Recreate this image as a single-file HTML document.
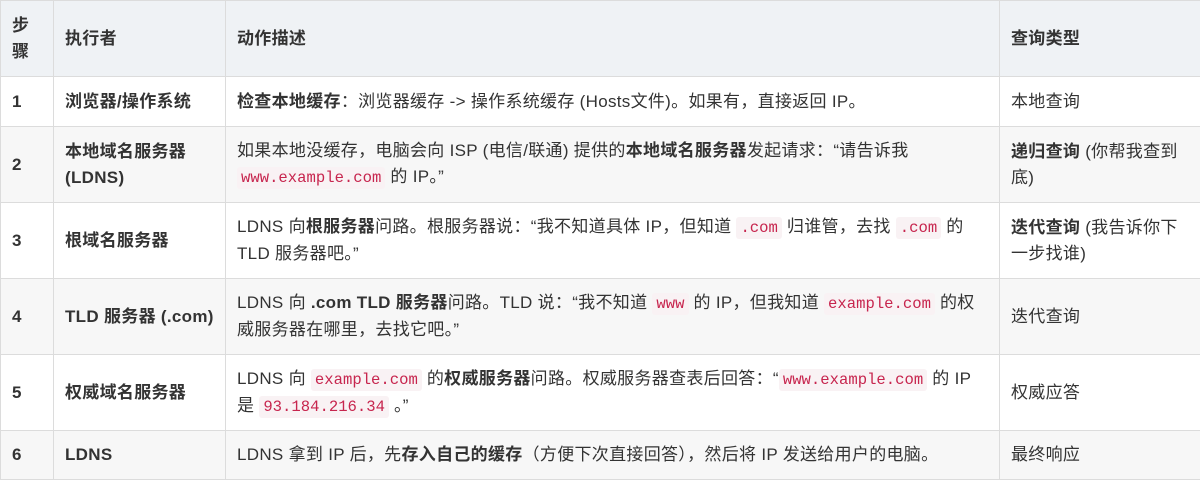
<!DOCTYPE html>
<html><head><meta charset="utf-8"><style>
body{margin:0;background:#fff;font-family:"Liberation Sans","Noto Sans CJK SC",sans-serif;font-size:17px;color:#333;}
table{border-collapse:collapse;width:1201px;table-layout:fixed;margin:0;}
td,th{border:1px solid #dcdcdc;padding:0 11px;line-height:26px;text-align:left;vertical-align:middle;white-space:nowrap;letter-spacing:0.3px;}
th{background:#eff2f5;font-weight:bold;}
tr:nth-child(odd) td{background:#f7f7f7;}
code{font-family:"Liberation Mono",monospace;font-size:15.6px;color:#c7254e;background:#f9f2f4;padding:2px 4px;border-radius:3px;letter-spacing:0;}
b{font-weight:bold;}
</style></head><body>
<table>
<colgroup><col style="width:53px"><col style="width:172px"><col style="width:774px"><col style="width:202px"></colgroup>
<tr style="height:76px"><th>步<br>骤</th><th>执行者</th><th>动作描述</th><th>查询类型</th></tr>
<tr style="height:50px"><td><b>1</b></td><td><b>浏览器/操作系统</b></td><td><b>检查本地缓存</b>：浏览器缓存 -&gt; 操作系统缓存 (Hosts文件)。如果有，直接返回 IP。</td><td>本地查询</td></tr>
<tr style="height:76px"><td><b>2</b></td><td><b>本地域名服务器<br>(LDNS)</b></td><td>如果本地没缓存，电脑会向 ISP (电信/联通) 提供的<b>本地域名服务器</b>发起请求：“请告诉我<br><code>www.example.com</code> 的 IP。”</td><td><b>递归查询</b> (你帮我查到<br>底)</td></tr>
<tr style="height:76px"><td><b>3</b></td><td><b>根域名服务器</b></td><td>LDNS 向<b>根服务器</b>问路。根服务器说：“我不知道具体 IP，但知道 <code>.com</code> 归谁管，去找 <code>.com</code> 的<br>TLD 服务器吧。”</td><td><b>迭代查询</b> (我告诉你下<br>一步找谁)</td></tr>
<tr style="height:76px"><td><b>4</b></td><td><b>TLD 服务器 (.com)</b></td><td>LDNS 向 <b>.com TLD 服务器</b>问路。TLD 说：“我不知道 <code>www</code> 的 IP，但我知道 <code>example.com</code> 的权<br>威服务器在哪里，去找它吧。”</td><td>迭代查询</td></tr>
<tr style="height:76px"><td><b>5</b></td><td><b>权威域名服务器</b></td><td>LDNS 向 <code>example.com</code> 的<b>权威服务器</b>问路。权威服务器查表后回答：“<code>www.example.com</code> 的 IP<br>是 <code>93.184.216.34</code> 。”</td><td>权威应答</td></tr>
<tr style="height:49px"><td><b>6</b></td><td><b>LDNS</b></td><td>LDNS 拿到 IP 后，先<b>存入自己的缓存</b>（方便下次直接回答），然后将 IP 发送给用户的电脑。</td><td>最终响应</td></tr>
</table>
</body></html>
